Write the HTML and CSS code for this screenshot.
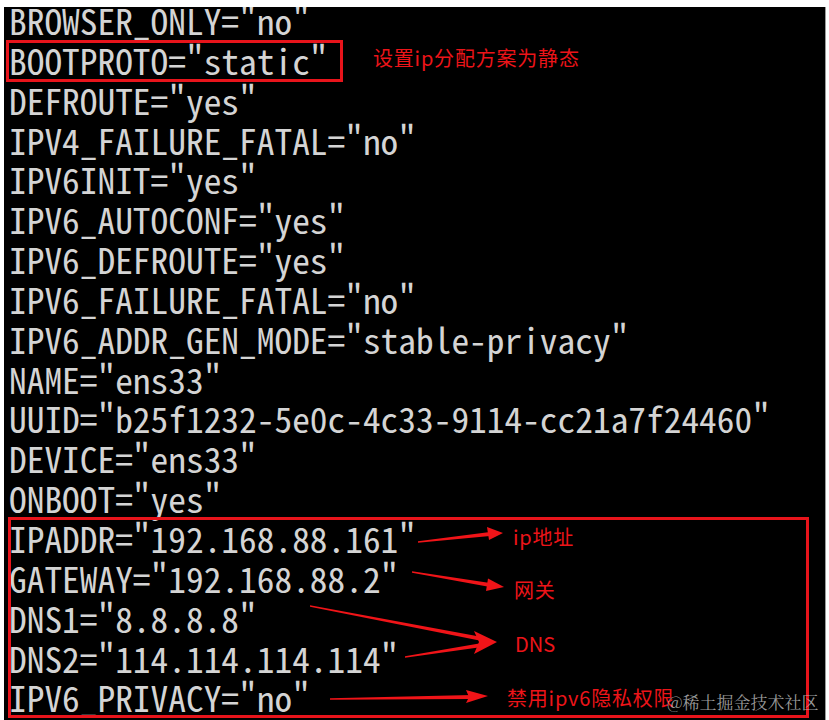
FILE: index.html
```html
<!DOCTYPE html>
<html lang="zh-CN">
<head>
<meta charset="utf-8">
<title>ifcfg-ens33</title>
<link rel="stylesheet" href="styles.css">
</head>
<body>
<div class="stage">
  <div class="terminal">
    <div class="lines">
      <div class="line">BROWSER_ONLY="no"</div>
      <div class="line">BOOTPROTO="static"</div>
      <div class="line">DEFROUTE="yes"</div>
      <div class="line">IPV4_FAILURE_FATAL="no"</div>
      <div class="line">IPV6INIT="yes"</div>
      <div class="line">IPV6_AUTOCONF="yes"</div>
      <div class="line">IPV6_DEFROUTE="yes"</div>
      <div class="line">IPV6_FAILURE_FATAL="no"</div>
      <div class="line">IPV6_ADDR_GEN_MODE="stable-privacy"</div>
      <div class="line">NAME="ens33"</div>
      <div class="line">UUID="b25f1232-5e0c-4c33-9114-cc21a7f24460"</div>
      <div class="line">DEVICE="ens33"</div>
      <div class="line">ONBOOT="yes"</div>
      <div class="line">IPADDR="192.168.88.161"</div>
      <div class="line">GATEWAY="192.168.88.2"</div>
      <div class="line">DNS1="8.8.8.8"</div>
      <div class="line">DNS2="114.114.114.114"</div>
      <div class="line">IPV6_PRIVACY="no"</div>
    </div>
  </div>

  <div class="annotations">
    <svg class="marks" width="829" height="720" viewBox="0 0 829 720">
      <g fill="none" stroke="#e8141b" stroke-width="3">
        <rect x="7.5" y="41.5" width="334" height="39"/>
        <rect x="9.5" y="518.5" width="798" height="198"/>
      </g>
      <g fill="#f01418" stroke="none">
        <polygon points="418,541.2 490,532 490,536 418,542.8"/>
        <polygon points="503,533 487,527 489,540"/>

        <polygon points="412,571.2 490,583 490,587 412,572.8"/>
        <polygon points="504,587 488,578.5 486,591"/>

        <polygon points="310,605.2 482,637 482,641 310,606.8"/>
        <polygon points="405,656.2 482,643 482,647 405,657.8"/>
        <polygon points="497,642 474,631 479,642 474,654"/>

        <polygon points="330,698.2 472,695 472,699 330,699.8"/>
        <polygon points="488,696 466,690 469,697 466,703"/>
      </g>
    </svg>
    <span class="note note-proto">设置ip分配方案为静态</span>
    <span class="note note-ip">ip地址</span>
    <span class="note note-gw">网关</span>
    <span class="note note-dns">DNS</span>
    <span class="note note-v6">禁用ipv6隐私权限</span>
    <span class="watermark">@稀土掘金技术社区</span>
  </div>
</div>
</body>
</html>
```
FILE: styles.css
```css
html, body {
  margin: 0;
  padding: 0;
  background: #ffffff;
}

.stage {
  position: relative;
  width: 829px;
  height: 720px;
  overflow: hidden;
}

.terminal {
  margin: 7px 3px 0 4px;
  height: 713px;
  background: #000000;
  border-right: 1px solid #9a9a9a;
  overflow: hidden;
  box-sizing: border-box;
}

.lines {
  margin-top: -7px;
  padding-left: 5px;
  font-family: "Noto Sans Mono CJK SC", "Liberation Mono", monospace;
  font-size: 35.4px;
  line-height: 39.85px;
  color: #d4d4d4;
}

.line {
  white-space: pre;
}

.annotations {
  position: absolute;
  inset: 0;
  pointer-events: none;
}

.marks {
  position: absolute;
  left: 0;
  top: 0;
}

.note {
  position: absolute;
  font-family: "Noto Sans CJK SC", "Noto Sans", sans-serif;
  font-size: 20px;
  line-height: 20px;
  letter-spacing: 0.8px;
  color: #ec1419;
  white-space: nowrap;
}

.note-proto { left: 373px; top: 48px; }
.note-ip    { left: 513px; top: 527px; }
.note-gw    { left: 514px; top: 580px; }
.note-dns   { left: 515px; top: 634px; letter-spacing: 0; }
.note-v6    { left: 507px; top: 688px; }

.watermark {
  position: absolute;
  left: 667px;
  top: 692px;
  font-family: "Noto Serif CJK SC", "Noto Sans CJK SC", serif;
  font-size: 17px;
  line-height: 20px;
  color: rgba(205, 205, 205, 0.75);
  white-space: nowrap;
}
```
